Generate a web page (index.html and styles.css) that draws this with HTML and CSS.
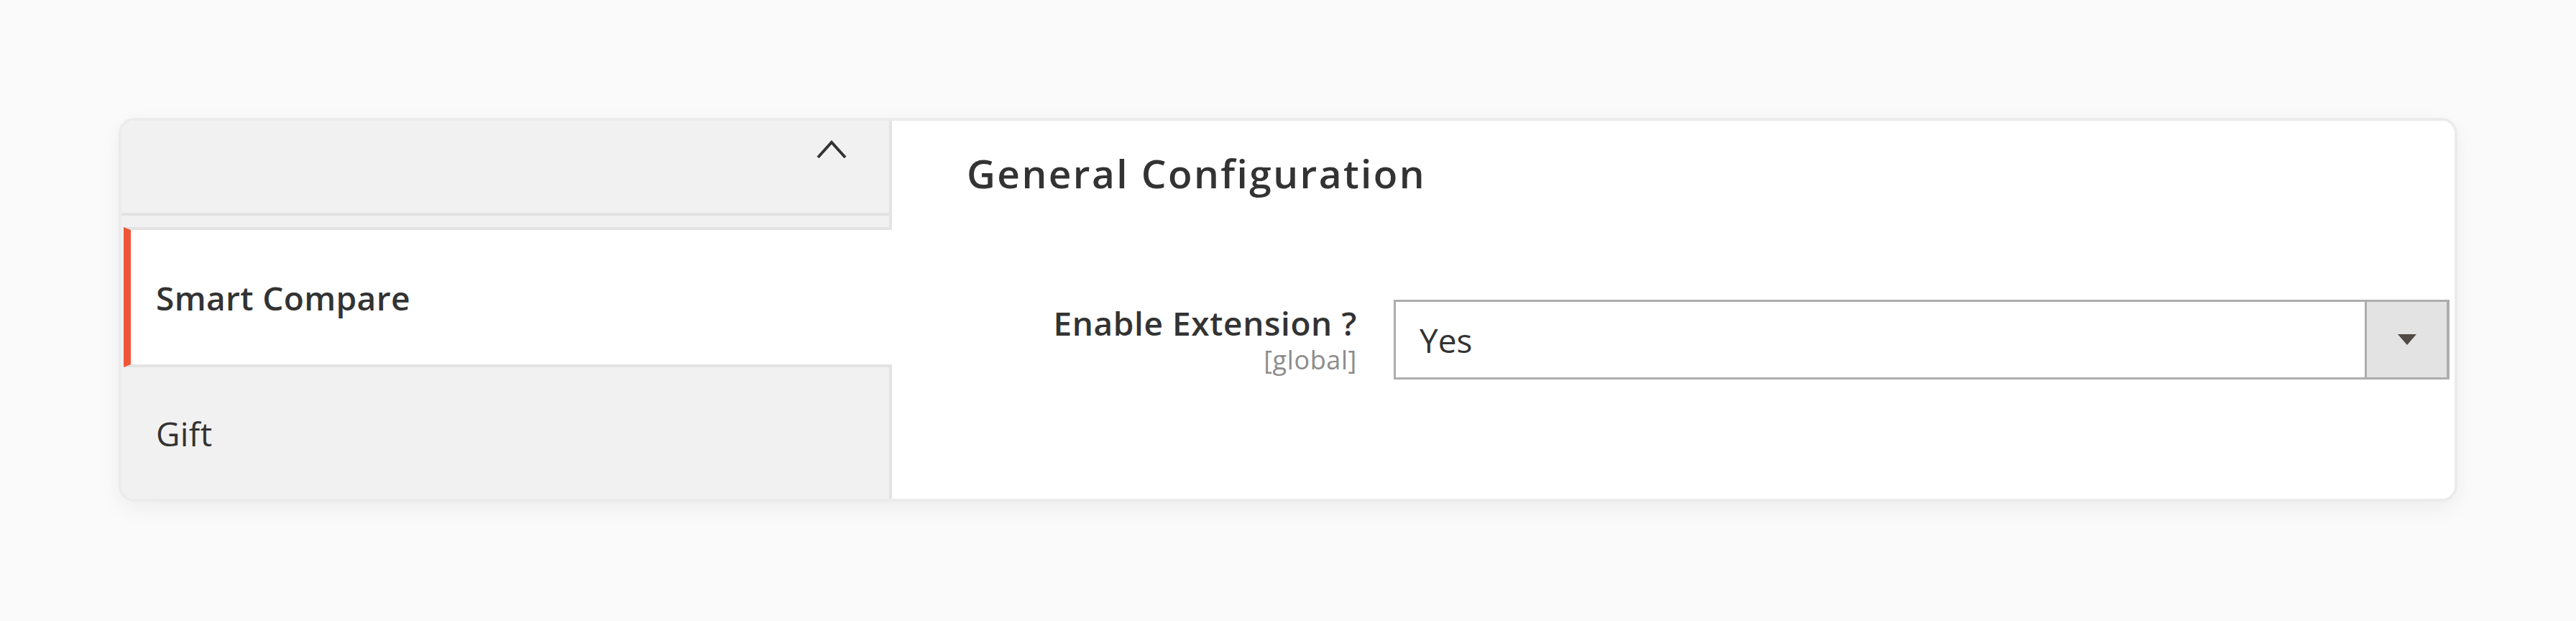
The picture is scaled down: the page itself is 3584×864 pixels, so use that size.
FILE: index.html
```html
<!DOCTYPE html>
<html lang="en">
<head>
<meta charset="utf-8">
<title>Configuration</title>
<link rel="stylesheet" href="styles.css">
</head>
<body>
<div class="card">
  <aside class="sidebar">
    <div class="side-head">
      <svg class="chevron" width="42" height="26" viewBox="0 0 42 26"><polyline points="2,24 21,3 40,24" fill="none" stroke="#333" stroke-width="4"/></svg>
    </div>
    <div class="side-gap"></div>
    <div class="nav-item active">Smart Compare</div>
    <div class="nav-item">Gift</div>
  </aside>
  <main class="content">
    <h1 class="title">General Configuration</h1>
    <div class="field">
      <div class="label">
        <div class="label-text">Enable Extension ?</div>
        <div class="scope">[global]</div>
      </div>
      <div class="select">
        <span class="select-value">Yes</span>
        <span class="select-btn"><span class="tri"></span></span>
      </div>
    </div>
  </main>
</div>
</body>
</html>
```
FILE: styles.css
```css
html, body {
  margin: 0;
  padding: 0;
}
body {
  background: #fafafa;
  font-family: "Open Sans", "Liberation Sans", sans-serif;
  color: #333;
  width: 3584px;
  height: 864px;
  overflow: hidden;
}
.card {
  box-sizing: border-box;
  margin: 164px 0 0 165px;
  width: 3254px;
  height: 534px;
  border: 4px solid #ebebeb;
  border-radius: 22px;
  overflow: hidden;
  display: flex;
  background: #fff;
  box-shadow: 0 10px 30px rgba(0, 0, 0, 0.05);
}
.sidebar {
  width: 1072px;
  flex: 0 0 1072px;
  background: #f1f1f1;
  display: flex;
  flex-direction: column;
}
.side-head {
  box-sizing: border-box;
  height: 132px;
  border-bottom: 4px solid #e3e3e3;
  border-right: 4px solid #e3e3e3;
  display: flex;
  justify-content: flex-end;
  align-items: flex-start;
  padding: 27px 59px 0 0;
}
.chevron {
  display: block;
}
.side-gap {
  height: 16px;
  border-right: 4px solid #e3e3e3;
}
.nav-item {
  display: flex;
  align-items: center;
  font-size: 46px;
  line-height: 1;
  letter-spacing: 0.4px;
  color: #333;
  padding-left: 48px;
  border-right: 4px solid #e3e3e3;
  flex: 1;
}
.nav-item.active {
  flex: 0 0 auto;
  box-sizing: border-box;
  height: 195px;
  background: #fff;
  font-weight: 600;
  margin-left: 3px;
  padding-left: 35px;
  border-left: 10px solid #ef5639;
  border-top: 4px solid #e3e3e3;
  border-bottom: 4px solid #e3e3e3;
  border-right: none;
}
.content {
  flex: 1;
  background: #fff;
  padding: 45px 7px 0 104px;
  display: flex;
  flex-direction: column;
}
.title {
  margin: 0;
  font-size: 55px;
  line-height: 1;
  font-weight: 600;
  letter-spacing: 2.4px;
  color: #333;
}
.field {
  margin-top: 149px;
  display: flex;
  align-items: flex-start;
}
.label {
  flex: 0 0 543px;
  text-align: right;
  padding-top: 9px;
}
.label-text {
  font-size: 46px;
  line-height: 1;
  font-weight: 600;
  letter-spacing: 0.6px;
  color: #333;
}
.scope {
  margin-top: 11px;
  font-size: 36px;
  line-height: 1;
  letter-spacing: 0.6px;
  color: #8c8c8c;
}
.select {
  margin-left: 51px;
  flex: 1;
  box-sizing: border-box;
  height: 111px;
  border: 3px solid #adadad;
  border-right-width: 4px;
  display: flex;
  align-items: stretch;
  background: #fff;
}
.select-value {
  flex: 1;
  display: flex;
  align-items: center;
  padding-left: 33px;
  font-size: 46px;
  line-height: 1;
  color: #333;
}
.select-btn {
  flex: 0 0 111px;
  border-left: 3px solid #adadad;
  background: #e3e3e3;
  display: flex;
  align-items: center;
  justify-content: center;
}
.tri {
  width: 0;
  height: 0;
  border-left: 13px solid transparent;
  border-right: 13px solid transparent;
  border-top: 15px solid #514943;
}
```
